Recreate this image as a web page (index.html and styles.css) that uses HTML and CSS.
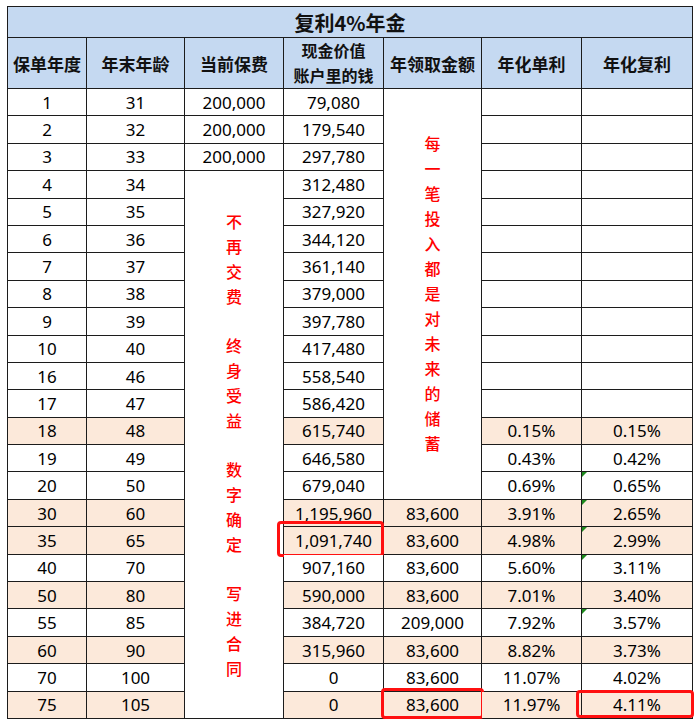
FILE: index.html
```html
<!DOCTYPE html>
<html lang="zh-CN">
<head>
<meta charset="utf-8">
<title>复利4%年金</title>
<link rel="stylesheet" href="styles.css">
</head>
<body>
<div class="page">
  <div class="sheet">
    <div class="title">复利4%年金</div>
    <div class="hd">保单年度</div>
    <div class="hd">年末年龄</div>
    <div class="hd">当前保费</div>
    <div class="hd two">现金价值<br>账户里的钱</div>
    <div class="hd">年领取金额</div>
    <div class="hd">年化单利</div>
    <div class="hd">年化复利</div>

    <!-- 1 -->
    <div class="c">1</div><div class="c">31</div><div class="c">200,000</div><div class="c">79,080</div>
    <div class="c merge m15"><div class="note"><span>每</span><span>一</span><span>笔</span><span>投</span><span>入</span><span>都</span><span>是</span><span>对</span><span>未</span><span>来</span><span>的</span><span>储</span><span>蓄</span></div></div>
    <div class="c"></div><div class="c"></div>
    <!-- 2 -->
    <div class="c">2</div><div class="c">32</div><div class="c">200,000</div><div class="c">179,540</div><div class="c"></div><div class="c"></div>
    <!-- 3 -->
    <div class="c">3</div><div class="c">33</div><div class="c">200,000</div><div class="c">297,780</div><div class="c"></div><div class="c"></div>
    <!-- 4 -->
    <div class="c">4</div><div class="c">34</div>
    <div class="c merge m20"><div class="note">
      <div class="grp"><span>不</span><span>再</span><span>交</span><span>费</span></div>
      <div class="grp"><span>终</span><span>身</span><span>受</span><span>益</span></div>
      <div class="grp"><span>数</span><span>字</span><span>确</span><span>定</span></div>
      <div class="grp"><span>写</span><span>进</span><span>合</span><span>同</span></div>
    </div></div>
    <div class="c">312,480</div><div class="c"></div><div class="c"></div>
    <!-- 5 -->
    <div class="c">5</div><div class="c">35</div><div class="c">327,920</div><div class="c"></div><div class="c"></div>
    <!-- 6 -->
    <div class="c">6</div><div class="c">36</div><div class="c">344,120</div><div class="c"></div><div class="c"></div>
    <!-- 7 -->
    <div class="c">7</div><div class="c">37</div><div class="c">361,140</div><div class="c"></div><div class="c"></div>
    <!-- 8 -->
    <div class="c">8</div><div class="c">38</div><div class="c">379,000</div><div class="c"></div><div class="c"></div>
    <!-- 9 -->
    <div class="c">9</div><div class="c">39</div><div class="c">397,780</div><div class="c"></div><div class="c"></div>
    <!-- 10 -->
    <div class="c">10</div><div class="c">40</div><div class="c">417,480</div><div class="c"></div><div class="c"></div>
    <!-- 16 -->
    <div class="c">16</div><div class="c">46</div><div class="c">558,540</div><div class="c"></div><div class="c"></div>
    <!-- 17 -->
    <div class="c">17</div><div class="c">47</div><div class="c">586,420</div><div class="c"></div><div class="c"></div>
    <!-- 18 -->
    <div class="c hl">18</div><div class="c hl">48</div><div class="c hl">615,740</div><div class="c hl">0.15%</div><div class="c hl">0.15%</div>
    <!-- 19 -->
    <div class="c">19</div><div class="c">49</div><div class="c">646,580</div><div class="c">0.43%</div><div class="c">0.42%</div>
    <!-- 20 -->
    <div class="c">20</div><div class="c">50</div><div class="c">679,040</div><div class="c">0.69%</div><div class="c flag">0.65%</div>
    <!-- 30 -->
    <div class="c hl">30</div><div class="c hl">60</div><div class="c hl">1,195,960</div><div class="c hl">83,600</div><div class="c hl">3.91%</div><div class="c hl flag">2.65%</div>
    <!-- 35 -->
    <div class="c hl">35</div><div class="c hl">65</div><div class="c hl box box-a">1,091,740</div><div class="c hl">83,600</div><div class="c hl">4.98%</div><div class="c hl flag">2.99%</div>
    <!-- 40 -->
    <div class="c">40</div><div class="c">70</div><div class="c">907,160</div><div class="c">83,600</div><div class="c">5.60%</div><div class="c flag">3.11%</div>
    <!-- 50 -->
    <div class="c hl">50</div><div class="c hl">80</div><div class="c hl">590,000</div><div class="c hl">83,600</div><div class="c hl">7.01%</div><div class="c hl">3.40%</div>
    <!-- 55 -->
    <div class="c">55</div><div class="c">85</div><div class="c">384,720</div><div class="c">209,000</div><div class="c">7.92%</div><div class="c flag">3.57%</div>
    <!-- 60 -->
    <div class="c hl">60</div><div class="c hl">90</div><div class="c hl">315,960</div><div class="c hl">83,600</div><div class="c hl">8.82%</div><div class="c hl">3.73%</div>
    <!-- 70 -->
    <div class="c">70</div><div class="c">100</div><div class="c">0</div><div class="c">83,600</div><div class="c">11.07%</div><div class="c">4.02%</div>
    <!-- 75 -->
    <div class="c hl">75</div><div class="c hl">105</div><div class="c hl">0</div><div class="c hl box box-b">83,600</div><div class="c hl">11.97%</div><div class="c hl box box-c">4.11%</div>
  </div>
</div>
</body>
</html>
```

FILE: styles.css
```css
html, body {
  margin: 0;
  padding: 0;
  background: #ffffff;
}

.page {
  padding: 6px 7px;
  font-family: "Noto Sans", "Noto Sans CJK SC", sans-serif;
  color: #000;
}

.sheet {
  width: 686px;
  height: 713px;
  box-sizing: border-box;
  display: grid;
  grid-template-columns: 78px 97px 98px 99px 97px 99px 110px;
  grid-template-rows: 30px 50px repeat(23, 1fr);
  gap: 1px;
  padding: 1px;
  background: #1c1c1c;
}

.title {
  grid-column: 1 / -1;
  background: #c5d9f1;
  font-family: "Noto Sans CJK SC", sans-serif;
  font-weight: bold;
  font-size: 20px;
  display: flex;
  align-items: center;
  justify-content: center;
  color: #111;
}

.hd {
  background: #c5d9f1;
  font-family: "Noto Sans CJK SC", sans-serif;
  font-weight: bold;
  font-size: 17px;
  display: flex;
  align-items: center;
  justify-content: center;
  text-align: center;
  color: #111;
}

.hd.two {
  line-height: 25px;
  font-size: 16px;
}

.c {
  background: #ffffff;
  font-size: 17px;
  display: flex;
  align-items: center;
  justify-content: center;
  white-space: nowrap;
  position: relative;
}

.c.hl {
  background: #fce9da;
}

.merge {
  flex-direction: column;
}

.m15 {
  grid-row: span 15;
}

.m20 {
  grid-row: span 20;
}

.note {
  display: flex;
  flex-direction: column;
  align-items: center;
  gap: 24px;
  color: #ff0000;
  font-family: "Noto Sans CJK SC", sans-serif;
  font-weight: 500;
  font-size: 16px;
}

.m15 .note {
  gap: 0;
}

.note span,
.grp span {
  display: block;
  line-height: 25px;
}

.grp {
  display: flex;
  flex-direction: column;
  align-items: center;
}

.flag::before {
  content: "";
  position: absolute;
  left: 0;
  top: 0;
  border-top: 5px solid #1d8a1d;
  border-right: 5px solid transparent;
}

.box::after {
  content: "";
  position: absolute;
  border: 3px solid #ff1010;
  border-radius: 4px;
}

.box-a::after {
  left: -7px;
  right: -1px;
  top: -6px;
  bottom: -3px;
}

.box-b::after {
  left: -3px;
  right: -3px;
  top: -4px;
  bottom: -1px;
}

.box-c::after {
  left: -6px;
  right: -2px;
  top: -2px;
  bottom: 0;
}
```
